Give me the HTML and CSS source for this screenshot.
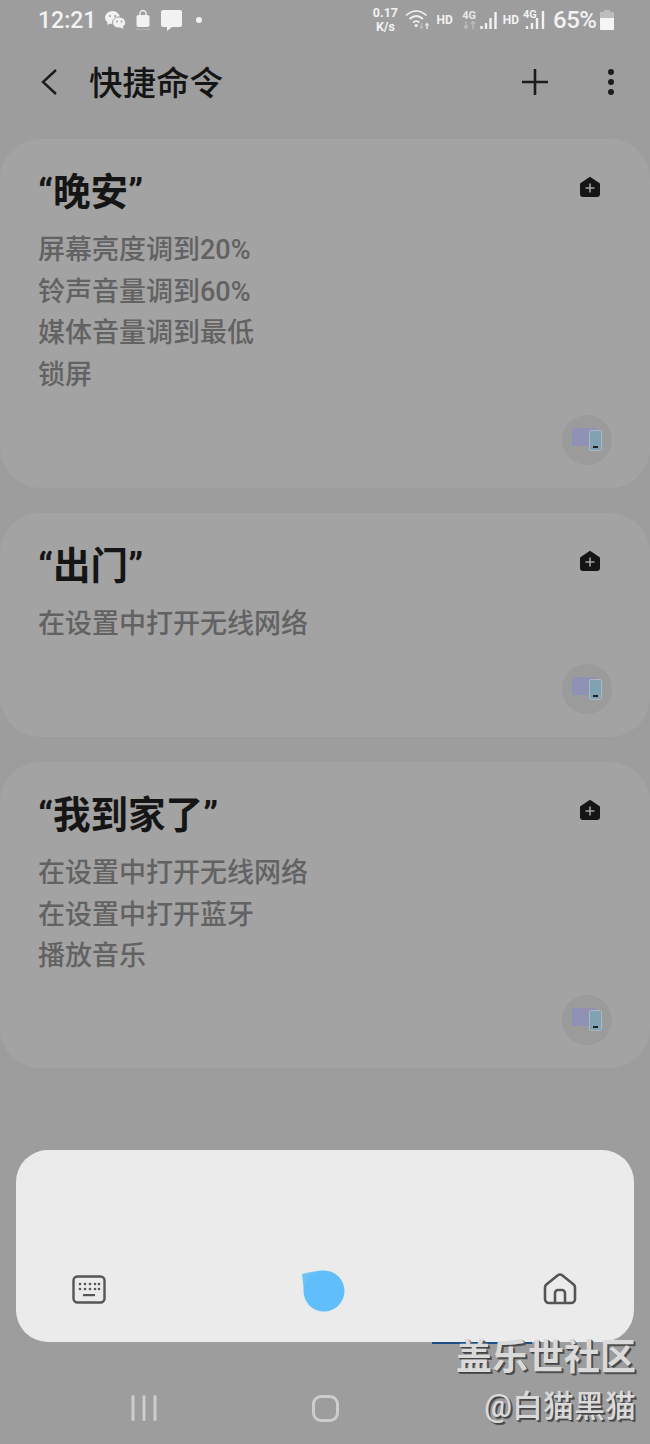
FILE: index.html
```html
<!DOCTYPE html>
<html lang="zh-CN">
<head>
  <meta charset="UTF-8">
  <meta name="viewport" content="width=device-width, initial-scale=1.0">
  <title>快捷命令</title>
  <link rel="stylesheet" href="styles.css">
</head>
<body>

  <div class="status-bar">
    <div class="status-left">
      <span class="clock">12:21</span>
      <svg class="ic-wechat" width="22" height="20" viewBox="0 0 22 20">
        <ellipse cx="8.5" cy="7.5" rx="7.5" ry="6.5" fill="#f2f2f2"/>
        <path d="M4 11l-1 4 4-2z" fill="#f2f2f2"/>
        <ellipse cx="15" cy="12.5" rx="6.5" ry="5.6" fill="#f2f2f2" stroke="#9d9d9d" stroke-width="1"/>
        <path d="M18 16l2 3-4-1.500z" fill="#f2f2f2"/>
        <circle cx="6" cy="6" r="1" fill="#9d9d9d"/>
        <circle cx="11" cy="6" r="1" fill="#9d9d9d"/>
        <circle cx="13" cy="11.500" r="0.900" fill="#9d9d9d"/>
        <circle cx="17.500" cy="11.500" r="0.900" fill="#9d9d9d"/>
      </svg>
      <svg class="ic-bag" width="16" height="20" viewBox="0 0 16 20">
        <path d="M5 6V3.500a3 3 0 0 1 6 0V6" fill="none" stroke="#f2f2f2" stroke-width="1.300"/>
        <rect x="1.500" y="5" width="13" height="12" rx="2" fill="#f2f2f2"/>
        <path d="M1 19.300h14" stroke="#bdbdbd" stroke-width="0.800"/>
      </svg>
      <svg class="ic-msg" width="21" height="21" viewBox="0 0 21 21">
        <path d="M2 0h17a2 2 0 0 1 2 2v13a2 2 0 0 1-2 2h-8l-5 4v-4H2a2 2 0 0 1-2-2V2a2 2 0 0 1 2-2z" fill="#f2f2f2"/>
      </svg>
      <span class="status-dot"></span>
    </div>
    <div class="status-right">
      <span class="speed">0.17<br>K/s</span>
      <svg class="ic-wifi" width="26" height="20" viewBox="0 0 26 20">
        <path d="M1 5.500c6.500-6 14-6 20.500 0M4.500 9c4.500-4 9-4 13.500 0M8 12.500c2.500-2 4-2 6.500 0" fill="none" stroke="#f2f2f2" stroke-width="1.700"/>
        <circle cx="11.200" cy="15.500" r="1.600" fill="#f2f2f2"/>
        <path d="M16.500 13v5M15 16.500l1.500 2 1.500-2" fill="none" stroke="#bdbdbd" stroke-width="1.200"/>
        <path d="M22 19v-5M20.500 15.500l1.500-2 1.500 2" fill="none" stroke="#f2f2f2" stroke-width="1.200"/>
      </svg>
      <span class="hd hd-first">HD</span>
      <span class="net net-dim">4G<svg width="15" height="8" viewBox="0 0 15 8"><path d="M4 0v7M2 5l2 2.500L6 5M11 8V1M9 3l2-2.500L13 3" fill="none" stroke="#bdbdbd" stroke-width="1.300"/></svg></span>
      <svg class="ic-signal" width="18" height="19" viewBox="0 0 18 19">
        <path d="M1.500 15v3M6 12v6M10.500 7v11M15.500 1v17" stroke="#f2f2f2" stroke-width="2.400"/>
      </svg>
      <span class="hd hd-second">HD</span>
      <span class="combo">
        <span class="net-small">4G</span>
        <svg width="21" height="20" viewBox="0 0 21 20">
          <path d="M2 16v3M7 13v6M12 8v11M18 1v18" stroke="#f2f2f2" stroke-width="2.400"/>
        </svg>
      </span>
      <span class="battery-text">65%</span>
      <svg class="ic-battery" width="14" height="20" viewBox="0 0 14 20">
        <path d="M4 0h6v2h3a1 1 0 0 1 1 1v5H0V3a1 1 0 0 1 1-1h3z" fill="#bdbdbd"/>
        <path d="M0 8h14v11a1 1 0 0 1-1 1H1a1 1 0 0 1-1-1z" fill="#f5f5f5"/>
      </svg>
    </div>
  </div>

  <header class="app-bar">
    <svg class="ic-back" width="18" height="28" viewBox="0 0 18 28">
      <path d="M16 2L3 14l13 12" fill="none" stroke="#1c1c1c" stroke-width="2.400"/>
    </svg>
    <h1 class="page-title">快捷命令</h1>
    <svg class="ic-plus" width="26" height="26" viewBox="0 0 26 26">
      <path d="M13 0v26M0 13h26" stroke="#1c1c1c" stroke-width="2.600"/>
    </svg>
    <div class="more">
      <span></span><span></span><span></span>
    </div>
  </header>

  <main class="card-list">
    <section class="card card-night">
      <div class="card-head">
        <h2 class="card-title">“晚安”</h2>
        <svg class="ic-addhome" width="22" height="22" viewBox="0 0 22 22">
          <path d="M11 .8L20.300 7a1.500 1.500 0 0 1 .7 1.300V18a3 3 0 0 1-3 3H4a3 3 0 0 1-3-3V8.300A1.500 1.500 0 0 1 1.700 7z" fill="#151515"/>
          <path d="M11 7.500v9M6.500 12h9" stroke="#a3a3a3" stroke-width="1.600"/>
        </svg>
      </div>
      <ul class="steps">
        <li>屏幕亮度调到20%</li>
        <li>铃声音量调到60%</li>
        <li>媒体音量调到最低</li>
        <li>锁屏</li>
      </ul>
      <div class="device-wrap">
        <span class="device"><i class="tablet"></i><i class="phone"><b></b></i></span>
      </div>
    </section>

    <section class="card card-out">
      <div class="card-head">
        <h2 class="card-title">“出门”</h2>
        <svg class="ic-addhome" width="22" height="22" viewBox="0 0 22 22">
          <path d="M11 .8L20.300 7a1.500 1.500 0 0 1 .7 1.300V18a3 3 0 0 1-3 3H4a3 3 0 0 1-3-3V8.300A1.500 1.500 0 0 1 1.700 7z" fill="#151515"/>
          <path d="M11 7.500v9M6.500 12h9" stroke="#a3a3a3" stroke-width="1.600"/>
        </svg>
      </div>
      <ul class="steps">
        <li>在设置中打开无线网络</li>
      </ul>
      <div class="device-wrap">
        <span class="device"><i class="tablet"></i><i class="phone"><b></b></i></span>
      </div>
    </section>

    <section class="card card-home">
      <div class="card-head">
        <h2 class="card-title">“我到家了”</h2>
        <svg class="ic-addhome" width="22" height="22" viewBox="0 0 22 22">
          <path d="M11 .8L20.300 7a1.500 1.500 0 0 1 .7 1.300V18a3 3 0 0 1-3 3H4a3 3 0 0 1-3-3V8.300A1.500 1.500 0 0 1 1.700 7z" fill="#151515"/>
          <path d="M11 7.500v9M6.500 12h9" stroke="#a3a3a3" stroke-width="1.600"/>
        </svg>
      </div>
      <ul class="steps">
        <li>在设置中打开无线网络</li>
        <li>在设置中打开蓝牙</li>
        <li>播放音乐</li>
      </ul>
      <div class="device-wrap">
        <span class="device"><i class="tablet"></i><i class="phone"><b></b></i></span>
      </div>
    </section>
  </main>

  <div class="voice-panel">
    <svg class="ic-keyboard" width="34" height="30" viewBox="0 0 34 30">
      <rect x="1.500" y="1.500" width="31" height="26" rx="4" fill="none" stroke="#555" stroke-width="2.400"/>
      <g fill="#555">
        <circle cx="8" cy="9" r="1.300"/><circle cx="13" cy="9" r="1.300"/><circle cx="18" cy="9" r="1.300"/><circle cx="23" cy="9" r="1.300"/><circle cx="27" cy="9" r="1.300"/>
        <circle cx="8" cy="14" r="1.300"/><circle cx="13" cy="14" r="1.300"/><circle cx="18" cy="14" r="1.300"/><circle cx="23" cy="14" r="1.300"/><circle cx="27" cy="14" r="1.300"/>
        <rect x="11" y="19" width="12" height="2.200"/>
      </g>
    </svg>
    <svg class="ic-bixby" width="46" height="42" viewBox="0 0 46 42">
      <path d="M1 4C8 2 15 1 22 .5V40C10 41.500 4 32 3 22z" fill="#6cc3f4"/>
      <circle cx="23" cy="21" r="20.500" fill="#60bffa"/>
    </svg>
    <svg class="ic-home" width="34" height="32" viewBox="0 0 34 32">
      <path d="M4 11L14.500 2.500a4 4 0 0 1 5 0L30 11a4 4 0 0 1 2 3.500V26a4 4 0 0 1-4 4H6a4 4 0 0 1-4-4V14.500A4 4 0 0 1 4 11z" fill="none" stroke="#555" stroke-width="2.600"/>
      <path d="M12 30V20a3 3 0 0 1 3-3h4a3 3 0 0 1 3 3v10" fill="none" stroke="#555" stroke-width="2.600"/>
    </svg>
  </div>

  <nav class="nav-bar">
    <svg width="26" height="26" viewBox="0 0 26 26">
      <path d="M2 1.500v23M13 1.500v23M24 1.500v23" stroke="#cdcdcd" stroke-width="3" stroke-linecap="round"/>
    </svg>
    <span class="nav-home"></span>
    <span class="nav-spacer"></span>
  </nav>

  <div class="watermark">
    <i class="watermark-line"></i>
    <div class="wm-main">盖乐世社区</div>
    <div class="wm-sub">@白猫黑猫</div>
  </div>

</body>
</html>
```

FILE: styles.css
```css
* {
  box-sizing: border-box;
}

body {
  margin: 0;
  width: 650px;
  height: 1444px;
  position: relative;
  overflow: hidden;
  background-color: #9d9d9d;
  font-family: 'Roboto', 'Noto Sans CJK SC', sans-serif;
  color: #151515;
}

/* status bar */
.status-bar {
  height: 40px;
  padding: 0 36px 0 38px;
  display: flex;
  align-items: center;
  justify-content: space-between;
  color: #f2f2f2;
}

.status-left,
.status-right {
  display: flex;
  align-items: center;
}

.clock {
  font-size: 23px;
  font-weight: 500;
  width: 54px;
  white-space: nowrap;
}

.ic-wechat {
  margin-left: 12px;
}

.ic-bag {
  margin-left: 9px;
}

.ic-msg {
  margin-left: 10px;
}

.status-dot {
  width: 6px;
  height: 6px;
  margin-left: 14px;
  border-radius: 50%;
  background-color: #f2f2f2;
}

.speed {
  font-size: 12.5px;
  line-height: 14px;
  font-weight: 700;
  text-align: center;
  width: 26px;
}

.ic-wifi {
  margin-left: 7px;
}

.hd {
  font-size: 12px;
  font-weight: 700;
}

.hd-first {
  margin-left: 5px;
}

.hd-second {
  margin-left: 5px;
}

.net {
  display: flex;
  flex-direction: column;
  align-items: center;
  font-size: 11px;
  line-height: 10px;
  font-weight: 700;
  margin-left: 9px;
}

.net-dim {
  color: #e6e6e6;
}

.ic-signal {
  margin-left: 3px;
}

.combo {
  display: flex;
  align-items: flex-start;
  margin-left: 4px;
  position: relative;
}

.net-small {
  font-size: 11px;
  line-height: 10px;
  font-weight: 700;
  position: absolute;
  left: 0;
  top: 0;
}

.combo svg {
  margin-left: 2px;
}

.battery-text {
  font-size: 24px;
  font-weight: 500;
  margin-left: 7px;
  width: 44px;
  letter-spacing: -.5px;
  white-space: nowrap;
}

.ic-battery {
  margin-left: 3px;
}

/* app bar */
.app-bar {
  height: 84px;
  padding: 0 36px 0 40px;
  display: flex;
  align-items: center;
}

.ic-back {
  flex: none;
}

.page-title {
  margin: 4px 0 0 31px;
  font-size: 33.5px;
  font-weight: 500;
  line-height: 40px;
  flex: 1;
}

.ic-plus {
  margin-right: 60px;
}

.more {
  display: flex;
  flex-direction: column;
  gap: 4px;
}

.more span {
  width: 6px;
  height: 6px;
  border-radius: 50%;
  background-color: #1c1c1c;
}

/* cards */
.card-list {
  margin-top: 15px;
  display: flex;
  flex-direction: column;
  gap: 25px;
}

.card {
  background-color: #a3a3a3;
  border-radius: 40px;
  padding: 26px 38px 0;
  display: flex;
  flex-direction: column;
}

.card-night {
  height: 349px;
}

.card-out {
  height: 224px;
}

.card-home {
  height: 306px;
}

.card-head {
  display: flex;
  align-items: center;
  justify-content: space-between;
  height: 50px;
}

.card-title {
  margin: 4px 0 0;
  font-size: 37.5px;
  font-weight: 700;
  line-height: 50px;
}

.ic-addhome {
  margin-top: -6px;
  margin-right: 11px;
}

.steps {
  list-style: none;
  margin: 15px 0 0;
  padding: 0;
  font-size: 27px;
  line-height: 41.5px;
  font-weight: 500;
  color: #626262;
}

.device-wrap {
  margin-top: auto;
  padding-bottom: 23px;
  display: flex;
  justify-content: flex-end;
}

.device {
  width: 50px;
  height: 50px;
  border-radius: 50%;
  background-color: #9b9b9b;
  position: relative;
  display: block;
}

.tablet {
  position: absolute;
  left: 10px;
  top: 13px;
  width: 25px;
  height: 18px;
  background-color: #8f92b5;
}

.phone {
  position: absolute;
  left: 27px;
  top: 15px;
  width: 13px;
  height: 21px;
  border-radius: 2px;
  border: 1px solid #b0b6bc;
  background-color: #7fa3b3;
}

.phone b {
  position: absolute;
  left: 3px;
  bottom: 2px;
  width: 5px;
  height: 2px;
  background-color: #222;
}

/* bixby panel */
.voice-panel {
  position: absolute;
  left: 16px;
  top: 1150px;
  width: 618px;
  height: 192px;
  padding: 0 57px 37px 56px;
  border-radius: 32px;
  background-color: #ebebeb;
  display: flex;
  align-items: flex-end;
  justify-content: space-between;
}

.ic-bixby {
  margin-left: -1px;
  margin-bottom: -7px;
}

/* nav bar */
.nav-bar {
  position: absolute;
  left: 0;
  top: 1394px;
  width: 100%;
  height: 28px;
  padding: 0 0 0 131px;
  display: flex;
  align-items: center;
}

.nav-home {
  width: 27px;
  height: 27px;
  margin-left: 155px;
  border: 3px solid #cdcdcd;
  border-radius: 9px;
}

.nav-spacer {
  flex: 1;
}

/* watermark */
.watermark {
  position: absolute;
  right: 14px;
  top: 1338px;
  text-align: right;
  color: #dadada;
  font-weight: 700;
  text-shadow: 1px 1px 0 #444, 2px 2px 0 #555;
}

.watermark-line {
  position: absolute;
  left: -24px;
  top: 4px;
  width: 100px;
  height: 2px;
  background-color: #1d4f86;
}

.wm-main {
  font-size: 36px;
  line-height: 40px;
  position: relative;
}

.wm-sub {
  font-size: 31px;
  line-height: 40px;
  font-weight: 500;
  margin-top: 9px;
}
```
